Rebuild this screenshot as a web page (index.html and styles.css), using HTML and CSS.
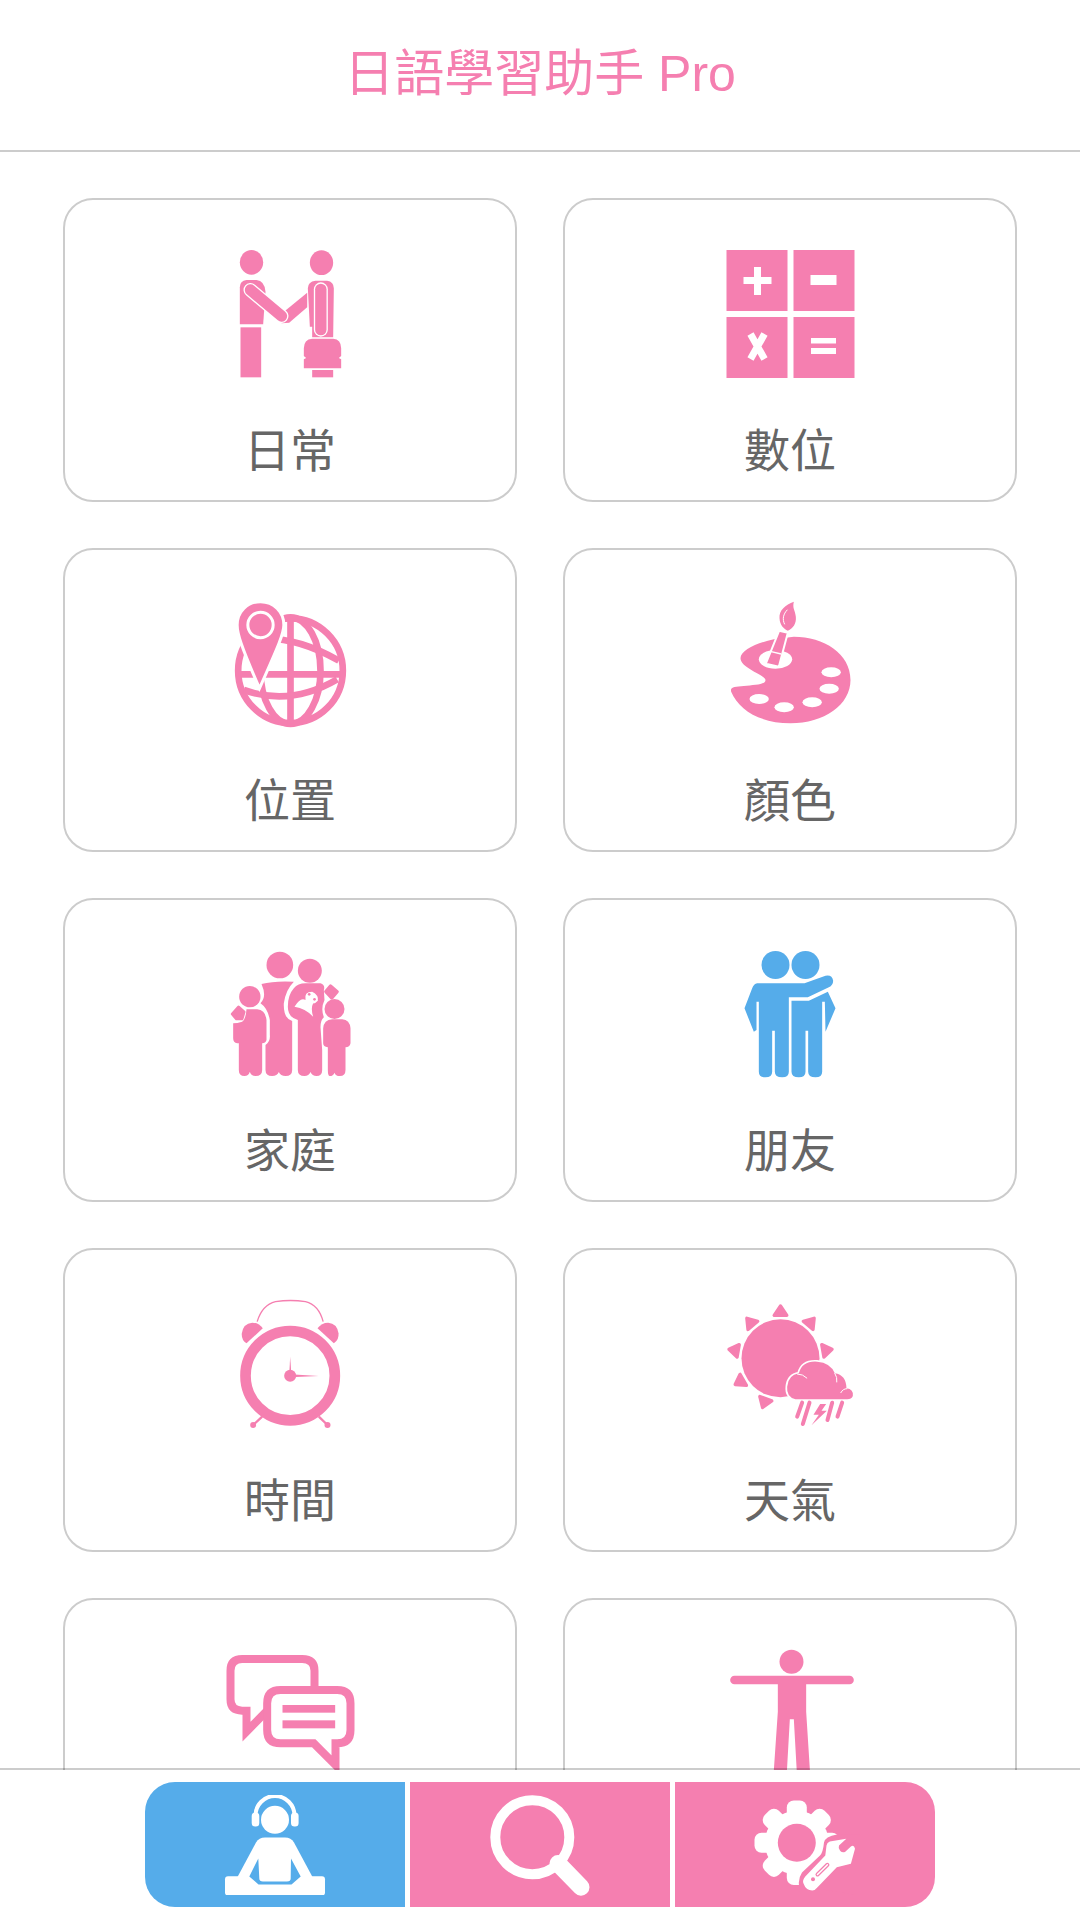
FILE: index.html
```html
<!DOCTYPE html>
<html lang="zh-Hant">
<head>
<meta charset="utf-8">
<title>日語學習助手 Pro</title>
<link rel="stylesheet" href="styles.css">
</head>
<body>
<div class="app">
  <header class="header"><h1 class="title">日語學習助手 Pro</h1></header>
  <main class="main">
    <div class="grid">
      <a class="card">
        <svg class="icon" viewBox="43.5 30 450 450">
          <ellipse cx="153" cy="97" rx="35" ry="37"/>
          <path d="M118 172Q118 152 138 150L168 150Q192 152 195 185L188 283L118 283Z"/>
          <rect x="120" y="292" width="62" height="150"/>
          <path d="M320 188L254 242L243 280L266 278L320 232Z"/>
          <line class="halo" x1="150" y1="180" x2="243" y2="258"/>
          <line class="limb" x1="150" y1="180" x2="243" y2="258"/>
          <ellipse cx="363" cy="98" rx="35" ry="37"/>
          <path d="M322 175Q322 155 345 152L380 152Q400 155 400 175L398 322L335 322L335 290L328 290Z"/>
          <line class="halo" x1="361" y1="178" x2="361" y2="299"/>
          <line class="limb" x1="361" y1="178" x2="361" y2="299"/>
          <path d="M310 355Q310 328 335 326L398 326Q422 328 422 355L422 378L415 384L422 388L422 415L310 415L310 388L317 384L310 378Z"/>
          <rect x="335" y="420" width="63" height="22"/>
        </svg>
        <span class="label">日常</span>
      </a>
      <a class="card">
        <svg class="icon" viewBox="714.5 240 150 150">
          <rect x="726" y="250" width="61" height="61"/>
          <rect x="793" y="250" width="61" height="61"/>
          <rect x="726" y="317" width="61" height="61"/>
          <rect x="793" y="317" width="61" height="61"/>
          <rect class="w" x="743" y="277" width="28" height="7"/>
          <rect class="w" x="753.5" y="267" width="7" height="28"/>
          <rect class="w" x="810" y="275" width="26" height="10"/>
          <path class="cross" d="M750 334L764 359M764 334L750 359"/>
          <rect class="w" x="810.500" y="338" width="25" height="5.500"/>
          <rect class="w" x="810.500" y="348" width="25" height="6"/>
        </svg>
        <span class="label">數位</span>
      </a>
      <a class="card">
        <svg class="icon" viewBox="13.5 0 450 450">
          <g class="globe">
            <circle cx="240" cy="242" r="157"/>
            <ellipse cx="240" cy="242" rx="90" ry="160"/>
            <line x1="240" y1="85" x2="240" y2="400"/>
            <line x1="85" y1="253" x2="390" y2="253"/>
            <path d="M120 150Q240 130 385 212"/>
            <path d="M100 300Q240 350 380 268"/>
          </g>
          <path class="pin" d="M150 35C190 35 220 65 220 105C220 130 205 165 147 295C90 165 80 130 80 105C80 65 110 35 150 35Z"/>
          <circle class="pin" cx="150" cy="105" r="38"/>
        </svg>
        <span class="label">位置</span>
      </a>
      <a class="card">
        <svg class="icon" viewBox="13.5 0 450 450">
          <path d="M190 148L250 140C340 140 420 190 420 270C420 345 340 400 240 400C150 400 85 360 62 305C58 290 75 290 100 288C130 285 165 285 165 270C165 255 90 235 90 205C90 180 140 158 190 148Z"/>
          <ellipse class="w" cx="195" cy="208" rx="50" ry="28"/>
          <ellipse class="w" cx="362" cy="247" rx="29" ry="15"/>
          <ellipse class="w" cx="356" cy="296" rx="29" ry="15"/>
          <ellipse class="w" cx="305" cy="337" rx="29" ry="15"/>
          <ellipse class="w" cx="221" cy="352" rx="29" ry="15"/>
          <ellipse class="w" cx="146" cy="327" rx="29" ry="15"/>
          <path class="handle" d="M206 122L232 128L205 230L166 221Z"/>
          <line class="hair" x1="179" y1="184" x2="212" y2="192"/>
          <path d="M250 35C225 45 205 60 207 85C208 105 220 118 232 122C248 115 258 100 256 80C254 60 245 55 250 35Z"/>
          <path class="sheen" d="M230 60C218 72 215 88 222 102"/>
        </svg>
        <span class="label">顏色</span>
      </a>
      <a class="card">
        <svg class="icon" viewBox="13.5 0 450 450">
          <circle cx="208" cy="75" r="40"/>
          <circle cx="298" cy="92" r="36"/>
          <circle cx="118" cy="170" r="32"/>
          <path class="soft" d="M66 222L84 202L100 216L94 236L78 236Z"/>
          <path d="M68 250Q80 250 95 245Q106 238 108 208L140 208Q165 210 168 240L168 300Q165 310 155 310L155 390Q155 408 135 408Q122 408 118 395Q114 408 102 408Q85 408 85 390L85 310L80 310Q68 308 68 295Z"/>
          <path d="M153 132Q190 122 250 125Q225 150 220 190Q218 235 245 243L245 390Q245 408 225 408Q210 408 205 396Q200 408 185 408Q165 408 165 390L165 315Q180 305 178 285L178 240Q172 205 150 190Q170 170 153 132Z"/>
          <path d="M250 145Q262 130 285 130L330 130Q345 135 340 150L342 180Q330 205 340 232Q330 240 330 262L335 330L335 390Q335 408 318 408Q305 408 300 396Q295 408 282 408Q262 408 262 390L262 240Q232 232 232 200Q232 165 250 145Z"/>
          <path class="w" d="M252 200Q270 170 285 180Q280 155 305 155Q325 165 322 182Q312 192 308 190Q300 205 308 230Q285 205 252 200Z"/>
          <circle cx="296" cy="163" r="4"/>
          <circle cx="312" cy="178" r="4"/>
          <path class="soft" d="M346 155L360 138L380 155L364 174Z"/>
          <circle cx="372" cy="207" r="30"/>
          <path d="M338 265Q340 240 365 238L395 238Q418 240 420 265L420 310Q418 322 405 322L405 390Q405 408 388 408Q375 408 372 398Q368 408 358 408Q352 408 352 390L352 322Q338 320 338 310Z"/>
        </svg>
        <span class="label">家庭</span>
      </a>
      <a class="card">
        <svg class="icon blue" viewBox="-16.5 0 450 450">
          <circle cx="165" cy="75" r="42"/>
          <circle cx="255" cy="75" r="42"/>
          <path d="M110 130L252 130L315 107Q335 103 338 122Q338 135 325 142L262 172L205 172L205 395Q205 412 185 412Q163 412 163 395L163 272L155 272L155 395Q155 412 135 412Q115 412 115 395L115 185L108 185L108 270L100 275L72 205L95 145Q100 132 110 130Z"/>
          <path d="M213 182L265 182L322 155L345 205L315 275L313 185L305 185L305 395Q305 412 285 412Q263 412 263 395L263 272L255 272L255 395Q255 412 235 412Q213 412 213 395Z"/>
        </svg>
        <span class="label">朋友</span>
      </a>
      <a class="card">
        <svg class="icon" viewBox="-16.5 0 450 450">
          <circle class="ring" cx="209" cy="257" r="134"/>
          <path d="M64 130Q68 100 95 98Q115 98 127 115L78 160Q62 150 64 130Z"/>
          <path d="M354 130Q350 100 323 98Q303 98 291 115L340 160Q356 150 354 130Z"/>
          <path class="thin" d="M110 95Q125 45 165 35Q210 28 255 35Q295 45 308 95"/>
          <path class="foot" d="M125 380L98 405M295 380L321 405"/>
          <circle cx="98" cy="405" r="9"/>
          <circle cx="321" cy="405" r="9"/>
          <circle cx="209" cy="257" r="18"/>
          <path d="M206 257L209 200L213 257Z"/>
          <path d="M209 253L295 258L209 262Z"/>
        </svg>
        <span class="label">時間</span>
      </a>
      <a class="card">
        <svg class="icon" viewBox="-1.5 0 450 450">
          <circle cx="195" cy="205" r="117"/>
          <path class="ray" transform="rotate(0 195 205)" d="M195 48L176 76L214 76Z"/>
          <path class="ray" transform="rotate(40 195 205)" d="M195 48L176 76L214 76Z"/>
          <path class="ray" transform="rotate(80 195 205)" d="M195 48L176 76L214 76Z"/>
          <path class="ray" transform="rotate(-40 195 205)" d="M195 48L176 76L214 76Z"/>
          <path class="ray" transform="rotate(-80 195 205)" d="M195 48L176 76L214 76Z"/>
          <path class="ray" transform="rotate(-120 195 205)" d="M195 48L176 76L214 76Z"/>
          <path class="ray" transform="rotate(-160 195 205)" d="M195 48L176 76L214 76Z"/>
          <path class="cloud" d="M240 328Q212 320 215 290Q218 255 250 250Q260 212 305 215Q345 218 358 250Q392 255 393 295Q415 298 412 318Q408 328 395 328Z"/>
          <path class="sheen" d="M246 252Q262 252 274 264M358 250Q366 262 364 276M376 308Q382 296 394 296"/>
          <path class="rain" d="M260 338L245 380M282 338L262 402M350 338L336 390M380 338L366 380"/>
          <path d="M314 342L294 374L310 374L288 406L334 362L318 362L332 342Z"/>
        </svg>
        <span class="label">天氣</span>
      </a>
      <a class="card">
        <svg class="icon" viewBox="13.5 0 450 450">
          <path class="bubble" d="M95 57L275 57Q312 57 312 92L312 150M170 212L108 275L108 212L95 212Q60 212 60 178L60 92Q60 57 95 57"/>
          <path class="bubble" d="M210 150L380 150Q420 150 420 190L420 270Q420 310 380 310L375 310L375 375L310 310L210 310Q170 310 170 270L170 190Q170 150 210 150Z"/>
          <rect x="216" y="195" width="158" height="23"/>
          <rect x="216" y="241" width="158" height="24"/>
        </svg>
      </a>
      <a class="card">
        <svg class="icon" viewBox="13.5 0 450 450">
          <circle cx="243" cy="65" r="36"/>
          <line class="arms" x1="72" y1="120" x2="417" y2="120"/>
          <path d="M202 120L287 120L287 215L302 450L262 450L250 238L238 238L226 450L186 450L202 215Z"/>
        </svg>
      </a>
    </div>
  </main>
  <footer class="footer">
    <a class="tab tab-first">
      <svg class="tab-icon white" viewBox="220 1794.500 110 100">
        <rect x="225" y="1875.700" width="100" height="19.300" rx="3"/>
        <path d="M236.700 1878L256 1842Q259 1837 265 1837L285 1837Q291 1837 294 1842L313.300 1878Z"/>
        <path class="b" d="M258.300 1858L249.300 1876L258.500 1884L291.500 1884L300.700 1876L291 1858L290.700 1878Q290.700 1881 287 1881L263 1881Q259.300 1881 259.300 1878Z"/>
        <circle cx="275" cy="1819.300" r="14"/>
        <path class="band" d="M255.500 1815A19.500 19.500 0 0 1 294.500 1815"/>
        <rect x="251.700" y="1812" width="7.600" height="14" rx="3.500"/>
        <rect x="291" y="1812" width="7.600" height="14" rx="3.500"/>
      </svg>
    </a>
    <a class="tab tab-mid">
      <svg class="tab-icon" viewBox="485 1789.500 110 110">
        <circle class="lens" cx="532.300" cy="1836.700" r="37"/>
        <line class="lens-handle" x1="558" y1="1863" x2="581" y2="1886.700"/>
      </svg>
    </a>
    <a class="tab tab-last">
      <svg class="tab-icon white" viewBox="750 1794.500 110 100">
        <circle cx="796.800" cy="1842.300" r="32"/>
        <rect x="786.800" y="1800" width="20" height="20" rx="7"/>
        <rect transform="rotate(45 796.800 1842.300)" x="786.800" y="1800" width="20" height="20" rx="7"/>
        <rect transform="rotate(90 796.800 1842.300)" x="786.800" y="1800" width="20" height="20" rx="7"/>
        <rect transform="rotate(135 796.800 1842.300)" x="786.800" y="1800" width="20" height="20" rx="7"/>
        <rect transform="rotate(180 796.800 1842.300)" x="786.800" y="1800" width="20" height="20" rx="7"/>
        <rect transform="rotate(225 796.800 1842.300)" x="786.800" y="1800" width="20" height="20" rx="7"/>
        <rect transform="rotate(270 796.800 1842.300)" x="786.800" y="1800" width="20" height="20" rx="7"/>
        <rect transform="rotate(315 796.800 1842.300)" x="786.800" y="1800" width="20" height="20" rx="7"/>
        <circle class="p" cx="796.800" cy="1842.300" r="19"/>
        <path class="p" d="M837 1834Q825 1836 824 1842Q823 1852 820 1855L802 1872Q798 1878 799 1885L860 1895L860 1834Z"/>
        <path d="M846.300 1838.300L829.800 1841Q827 1842 826.500 1845L825.300 1855L805.300 1876Q802 1880 803.500 1883Q806 1890 812.300 1890Q815 1890 817.500 1886.700L836.800 1866.700L850.900 1863.300L855 1848.300Q854 1844 850.900 1846L845 1851.500Q841 1852.500 840 1850Q838 1847 839 1845L846.300 1838.300Z"/>
        <line class="slot" x1="817.500" y1="1874" x2="827.400" y2="1864.300"/>
        <line class="slot-in" x1="817.500" y1="1874" x2="827.400" y2="1864.300"/>
        <circle class="p" cx="813" cy="1878.700" r="2"/>
      </svg>
    </a>
  </footer>
</div>
</body>
</html>
```
FILE: styles.css
```css
* {
  box-sizing: border-box;
}

html,
body {
  margin: 0;
  padding: 0;
  background: #fff;
}

body {
  font-family: "Liberation Sans", "Noto Sans CJK TC", sans-serif;
}

.app {
  display: flex;
  flex-direction: column;
  width: 1080px;
  height: 1920px;
  overflow: hidden;
}

.header {
  flex: none;
  display: flex;
  align-items: center;
  justify-content: center;
  height: 152px;
  padding-bottom: 12px;
  border-bottom: 2px solid #ccc;
}

.title {
  margin: 0;
  font-size: 50px;
  font-weight: 400;
  color: #f57fb0;
}

.main {
  flex: 1;
  min-height: 0;
  overflow: hidden;
  padding-top: 46px;
}

.grid {
  display: grid;
  grid-template-columns: 453.500px 453.500px;
  grid-auto-rows: 304px;
  column-gap: 46.500px;
  row-gap: 46px;
  justify-content: center;
}

.card {
  display: flex;
  flex-direction: column;
  align-items: center;
  padding-top: 40px;
  border: 2px solid #ccc;
  border-radius: 30px;
  background: #fff;
}

.label {
  margin-top: 29px;
  font-size: 46px;
  line-height: 64px;
  color: #666;
}

.icon {
  flex: none;
  width: 150px;
  height: 150px;
  fill: #f57fb0;
}

.icon.blue {
  fill: #55acea;
}

.w {
  fill: #fff;
}

.halo,
.limb {
  stroke-linecap: round;
}

.halo {
  stroke: #fff;
  stroke-width: 42px;
}

.limb {
  stroke: #f57fb0;
  stroke-width: 34px;
}

.cross {
  fill: none;
  stroke: #fff;
  stroke-width: 7px;
}

.globe * {
  fill: none;
  stroke: #f57fb0;
  stroke-width: 20px;
}

.pin {
  stroke: #fff;
  stroke-width: 9px;
}

.handle {
  stroke: #fff;
  stroke-width: 6px;
}

.hair {
  stroke: #fff;
  stroke-width: 4px;
}

.sheen {
  fill: none;
  stroke: #fff;
  stroke-width: 3px;
  stroke-linecap: round;
}

.soft {
  stroke: #f57fb0;
  stroke-width: 10px;
  stroke-linejoin: round;
}

.ring {
  fill: none;
  stroke: #f57fb0;
  stroke-width: 32px;
}

.thin {
  fill: none;
  stroke: #f57fb0;
  stroke-width: 4px;
}

.foot {
  fill: none;
  stroke: #f57fb0;
  stroke-width: 7px;
}

.ray {
  stroke: #f57fb0;
  stroke-width: 10px;
  stroke-linejoin: round;
}

.cloud {
  stroke: #fff;
  stroke-width: 10px;
  paint-order: stroke;
}

.rain {
  fill: none;
  stroke: #f57fb0;
  stroke-width: 12px;
  stroke-linecap: round;
}

.bubble {
  fill: none;
  stroke: #f57fb0;
  stroke-width: 24px;
}

.arms {
  stroke: #f57fb0;
  stroke-width: 26px;
  stroke-linecap: round;
}

.footer {
  flex: none;
  position: relative;
  z-index: 1;
  display: flex;
  justify-content: center;
  gap: 5px;
  height: 152px;
  margin-top: -2px;
  padding: 12px 0 13px;
  border-top: 2px solid rgba(0, 0, 0, 0.2);
  background: #fff;
  background-clip: padding-box;
}

.tab {
  display: flex;
  align-items: center;
  justify-content: center;
  width: 260px;
  background: #f57fb0;
}

.tab-first {
  background: #55acea;
  border-radius: 30px 0 0 30px;
}

.tab-last {
  border-radius: 0 30px 30px 0;
}

.tab-icon {
  flex: none;
  width: 110px;
  height: 100px;
  fill: #fff;
}

.tab-mid .tab-icon {
  height: 110px;
}

.b {
  fill: #55acea;
}

.p {
  fill: #f57fb0;
}

.band {
  fill: none;
  stroke: #fff;
  stroke-width: 4px;
}

.lens {
  fill: none;
  stroke: #fff;
  stroke-width: 10px;
}

.lens-handle {
  stroke: #fff;
  stroke-width: 17px;
  stroke-linecap: round;
}

.slot {
  stroke: #f57fb0;
  stroke-width: 4px;
  stroke-linecap: round;
}

.slot-in {
  stroke: #fff;
  stroke-width: 1.500px;
  stroke-linecap: round;
}
```
